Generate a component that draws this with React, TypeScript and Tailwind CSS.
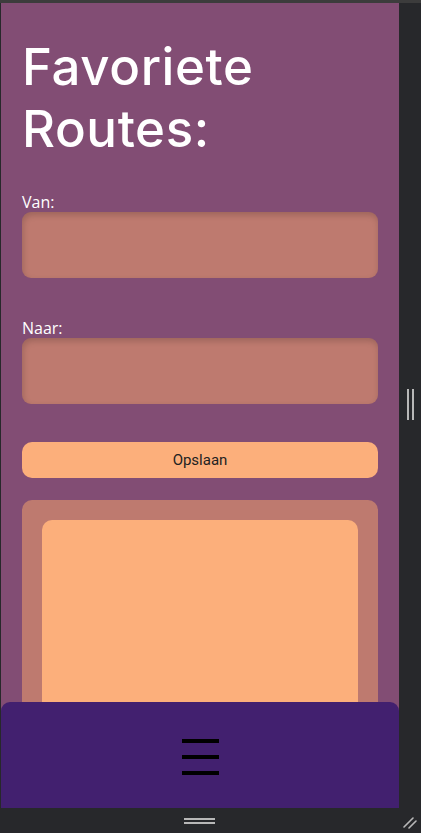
export default function App() {
  return (
    <div className="h-[833px] w-[421px] overflow-hidden bg-[#27282b] flex flex-col">
      <div className="h-[3px] bg-[#3c3c3c]" />
      <div className="flex flex-1 min-h-0">
        <div className="relative w-[398px] ml-[1px] h-[805px] overflow-hidden bg-[#824d74]">
          <div className="px-[21px] pt-[33px]">
            <h1 className="text-[51px] leading-[62px] text-white font-medium font-['Inter',sans-serif] tracking-[0.6px]">
              Favoriete
              <br />
              Routes:
            </h1>

            <label className="block mt-[33px] text-[16px] leading-[18px] text-white font-['Open_Sans',sans-serif]">
              Van:
            </label>
            <div className="mt-[1px] h-[66px] rounded-[9px] bg-[#be7a6f] shadow-[inset_1px_3px_6px_rgba(0,0,0,0.18)]" />

            <label className="block mt-[41px] text-[16px] leading-[18px] text-white font-['Open_Sans',sans-serif]">
              Naar:
            </label>
            <div className="mt-[1px] h-[66px] rounded-[9px] bg-[#be7a6f] shadow-[inset_1px_3px_6px_rgba(0,0,0,0.18)]" />

            <button className="mt-[38px] w-full h-[36px] rounded-[10px] bg-[#fcaf7b] text-[15px] text-[#222] font-['Roboto',sans-serif]">
              Opslaan
            </button>

            <div className="mt-[22px] rounded-[10px] bg-[#be7a6f] p-[20px] h-[320px]">
              <div className="h-[300px] rounded-[10px] bg-[#fcaf7b]" />
            </div>
          </div>

          <nav className="absolute bottom-0 left-0 right-0 h-[106px] rounded-t-[9px] bg-[#42206f] flex items-center justify-center">
            <div className="flex flex-col gap-[12px] pt-[4px]">
              <span className="block w-[37px] h-[4px] bg-black" />
              <span className="block w-[37px] h-[4px] bg-black" />
              <span className="block w-[37px] h-[4px] bg-black" />
            </div>
          </nav>
        </div>

        <div className="flex-1 flex items-center justify-center">
          <div className="flex gap-[3px] -mt-[2px]">
            <span className="block w-[2px] h-[31px] bg-[#b8b8b8]" />
            <span className="block w-[2px] h-[31px] bg-[#b8b8b8]" />
          </div>
        </div>
      </div>
      <div className="relative h-[25px] flex">
        <div className="w-[399px] flex items-center justify-center">
          <div className="flex flex-col gap-[2px]">
            <span className="block w-[31px] h-[2px] bg-[#b8b8b8]" />
            <span className="block w-[31px] h-[2px] bg-[#b8b8b8]" />
          </div>
        </div>
        <svg className="absolute right-[4px] bottom-[4px]" width="14" height="14" viewBox="0 0 14 14">
          <path d="M1 12 L10 3 M6 13 L13 6" stroke="#b8b8b8" strokeWidth="1.6" strokeLinecap="round" />
        </svg>
      </div>
    </div>
  );
}
